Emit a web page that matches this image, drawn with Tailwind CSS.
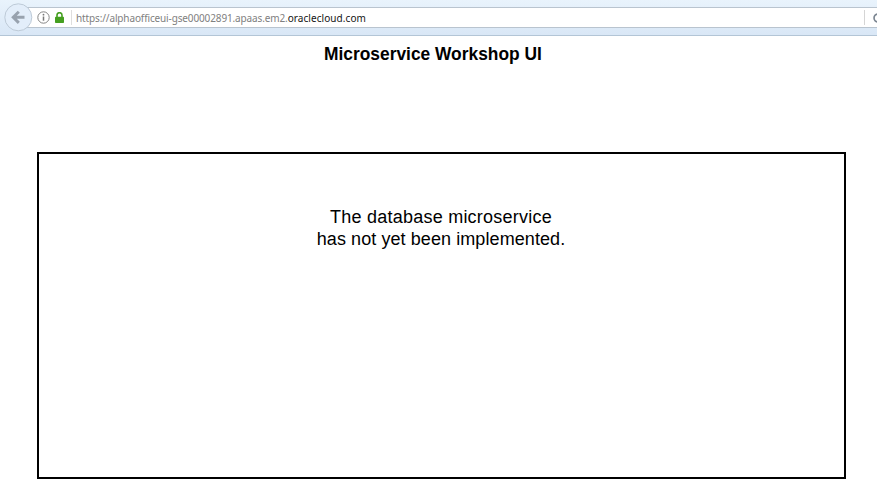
<!DOCTYPE html>
<html lang="en">
<head>
<meta charset="utf-8">
<title>Microservice Workshop UI</title>
<script src="https://cdn.jsdelivr.net/npm/@tailwindcss/browser@4"></script>
</head>
<body class="h-[489px] w-[877px] overflow-hidden bg-white font-['Liberation_Sans',Arial,sans-serif] text-black">
<header class="relative h-9 border-b border-[#b3c5d6] bg-linear-to-b from-[#e9f3fc] to-[#d9e7f6] pt-[7px]">
  <div class="ml-[18px] flex h-[21px] items-center border-y border-[#b9c4cf] bg-white pl-[19px]">
    <svg class="size-[13px] shrink-0" viewBox="0 0 13 13" fill="none" aria-hidden="true">
      <circle cx="6.5" cy="6.5" r="5.7" stroke="#858585"/>
      <path d="M6.5 5.5v4.2" stroke="#777" stroke-width="1.5"/>
      <circle cx="6.5" cy="3.7" r=".9" fill="#777"/>
    </svg>
    <svg class="ml-[5px] h-[11px] w-[9px] shrink-0" viewBox="0 0 9 11" fill="none" aria-hidden="true">
      <path d="M2 5.5V3.2a2.5 2.5 0 0 1 5 0v2.3" stroke="#459f20" stroke-width="1.6"/>
      <rect y="4.7" width="9" height="6.3" rx=".8" fill="#459f20"/>
    </svg>
    <span class="ml-[7px] h-[15px] w-px shrink-0 bg-[#dedede]"></span>
    <span class="ml-1 w-[290px] whitespace-nowrap pt-px font-['Noto_Sans',sans-serif] text-[10px] leading-[19px] tracking-[-0.13px] text-[#808080]">https://alphaofficeui-gse00002891.apaas.em2.<span class="tracking-[0.07px] text-[#151515]">oraclecloud.com</span></span>
    <span class="ml-auto h-[15px] w-px bg-[#d5d5d5]"></span>
    <svg class="ml-[8px] h-[12px] w-[4px] shrink-0" viewBox="0 0 4 12" fill="none" aria-hidden="true">
      <path d="M5 2a4 4 0 0 0 0 8" stroke="#7b8591" stroke-width="1.6"/>
    </svg>
  </div>
  <svg class="absolute left-1 top-[3px] size-[29px]" viewBox="0 0 29 29" fill="none" aria-hidden="true">
    <circle cx="14.3" cy="14.3" r="13.5" fill="#e3eefa" stroke="#bdcad7"/>
    <path d="M20.5 14.3H10M14.8 8.7l-5.6 5.6 5.6 5.6" stroke="#98a2ae" stroke-width="2.9"/>
  </svg>
</header>
<main>
  <h1 class="ml-[324px] mt-[7px] w-fit origin-left scale-x-[0.965] whitespace-nowrap text-[18px] font-bold leading-[22px]">Microservice Workshop UI</h1>
  <section class="ml-[37px] mt-[87px] h-[327px] w-[809px] border-2 border-black pr-px pt-[52px] text-center text-[18px] leading-[22px]">
    <p><span class="tracking-[0.24px]">The database microservice</span><br><span class="tracking-[0.08px]">has not yet been implemented.</span></p>
  </section>
</main>
</body>
</html>
